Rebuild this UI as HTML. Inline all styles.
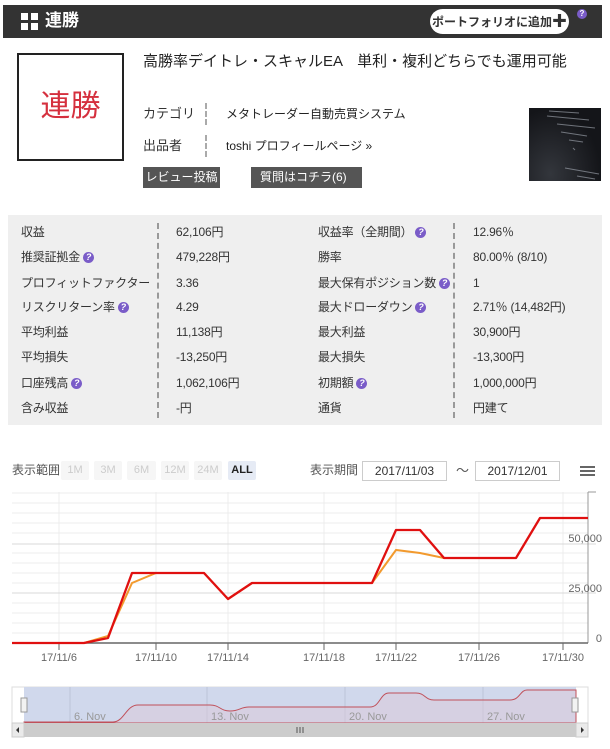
<!DOCTYPE html>
<html><head><meta charset="utf-8"><style>
*{margin:0;padding:0;box-sizing:border-box}
body{width:610px;height:749px;background:#fff;font-family:"Liberation Sans","Noto Sans CJK JP",sans-serif;color:#333;position:relative;overflow:hidden}
.a{position:absolute;white-space:nowrap}
.hdr{left:3px;top:5px;width:599px;height:33px;background:#333}
.q{display:inline-block;width:11px;height:11px;border-radius:50%;background:#7a5cc8;color:#fff;font-size:9px;line-height:11px;text-align:center;font-weight:bold;vertical-align:middle;margin-left:3px}
.tbl{left:8px;top:215px;width:594px;height:210px;background:#efefef}
.row{position:absolute;left:0;width:594px;height:25px;font-size:12px;line-height:25px;letter-spacing:-0.2px}
.row span{position:absolute}
.sep{position:absolute;top:4px;height:17px;border-left:2px dashed #999}
.btnr{position:absolute;top:461px;height:19px;font-size:11px;line-height:19px;text-align:center;color:#ccc;background:#f6f6f6;border-radius:2px}
.inp{position:absolute;top:461px;height:20px;border:1px solid #ccc;font-size:12px;line-height:18px;text-align:center;color:#333}
</style></head><body>
<div class="a hdr"></div>
<div class="a" style="left:21px;top:13px;width:7px;height:7px;background:#fff"></div>
<div class="a" style="left:31px;top:13px;width:7px;height:7px;background:#fff"></div>
<div class="a" style="left:21px;top:23px;width:7px;height:7px;background:#fff"></div>
<div class="a" style="left:31px;top:23px;width:7px;height:7px;background:#fff"></div>
<div class="a" style="left:45px;top:10px;color:#fff;font-size:17px;font-weight:bold;line-height:22px">連勝</div>
<div class="a" style="left:430px;top:9px;width:139px;height:25px;background:#fff;border-radius:13px;font-size:12px;font-weight:bold;line-height:25px;text-align:center;color:#333">ポートフォリオに追加<span style="font-size:15px">✚</span></div>
<div class="a" style="left:577px;top:9px;width:10px;height:10px;border-radius:50%;background:#7a5cc8;color:#fff;font-size:8px;line-height:10px;text-align:center;font-weight:bold">?</div>

<div class="a" style="left:17px;top:53px;width:107px;height:108px;border:2px solid #222;text-align:center;font-size:30px;line-height:104px;color:#d5303e;font-family:'Liberation Sans','Noto Sans CJK JP',sans-serif">連勝</div>
<div class="a" style="left:143px;top:52px;font-size:15px;line-height:20px;color:#222">高勝率デイトレ・スキャルEA　単利・複利どちらでも運用可能</div>
<div class="a" style="left:143px;top:104px;font-size:13px;line-height:20px">カテゴリ</div>
<div class="a" style="left:205px;top:103px;height:22px;border-left:2px dashed #aaa"></div>
<div class="a" style="left:226px;top:105px;font-size:12px;line-height:18px;color:#222">メタトレーダー自動売買システム</div>
<div class="a" style="left:143px;top:136px;font-size:13px;line-height:20px">出品者</div>
<div class="a" style="left:205px;top:135px;height:22px;border-left:2px dashed #aaa"></div>
<div class="a" style="left:226px;top:137px;font-size:12px;line-height:18px;color:#222">toshi プロフィールページ »</div>
<div class="a" style="left:143px;top:167px;width:77px;height:21px;background:#555;color:#fff;font-size:12px;line-height:21px;text-align:center">レビュー投稿</div>
<div class="a" style="left:251px;top:167px;width:111px;height:21px;background:#555;color:#fff;font-size:12px;line-height:21px;padding-left:9px">質問はコチラ(6)</div>
<div class="a" style="left:529px;top:108px;width:72px;height:73px;background:radial-gradient(ellipse at 30% 90%,#33363c,#141519 70%);overflow:hidden">
<svg width="72" height="73"><g stroke="#aab0ba" stroke-width="1" opacity=".6"><line x1="18" y1="8" x2="60" y2="12"/><line x1="28" y1="16" x2="66" y2="20"/><line x1="32" y1="24" x2="58" y2="28"/><line x1="40" y1="32" x2="54" y2="34"/><line x1="44" y1="40" x2="46" y2="42"/><line x1="36" y1="60" x2="70" y2="66"/><line x1="48" y1="68" x2="66" y2="71"/><line x1="20" y1="3" x2="50" y2="5"/></g></svg></div>

<div class="a tbl">
<div class="sep" style="left:149px;top:8px;height:195px"></div>
<div class="sep" style="left:445px;top:8px;height:195px"></div>
<div class="row" style="top:5px"><span style="left:13px">収益</span><span style="left:168px">62,106円</span><span style="left:310px">収益率（全期間）<i class="q">?</i></span><span style="left:465px">12.96％</span></div>
<div class="row" style="top:30px"><span style="left:13px">推奨証拠金<i class="q">?</i></span><span style="left:168px">479,228円</span><span style="left:310px">勝率</span><span style="left:465px">80.00％ (8/10)</span></div>
<div class="row" style="top:56px"><span style="left:13px">プロフィットファクター</span><span style="left:168px">3.36</span><span style="left:310px">最大保有ポジション数<i class="q">?</i></span><span style="left:465px">1</span></div>
<div class="row" style="top:80px"><span style="left:13px">リスクリターン率<i class="q">?</i></span><span style="left:168px">4.29</span><span style="left:310px">最大ドローダウン<i class="q">?</i></span><span style="left:465px">2.71％ (14,482円)</span></div>
<div class="row" style="top:105px"><span style="left:13px">平均利益</span><span style="left:168px">11,138円</span><span style="left:310px">最大利益</span><span style="left:465px">30,900円</span></div>
<div class="row" style="top:130px"><span style="left:13px">平均損失</span><span style="left:168px">-13,250円</span><span style="left:310px">最大損失</span><span style="left:465px">-13,300円</span></div>
<div class="row" style="top:156px"><span style="left:13px">口座残高<i class="q">?</i></span><span style="left:168px">1,062,106円</span><span style="left:310px">初期額<i class="q">?</i></span><span style="left:465px">1,000,000円</span></div>
<div class="row" style="top:181px"><span style="left:13px">含み収益</span><span style="left:168px">-円</span><span style="left:310px">通貨</span><span style="left:465px">円建て</span></div>
</div>

<div class="a" style="left:12px;top:462px;font-size:12px;line-height:17px;color:#555">表示範囲</div>
<div class="btnr" style="left:61px;width:28px">1M</div>
<div class="btnr" style="left:94px;width:28px">3M</div>
<div class="btnr" style="left:127px;width:29px">6M</div>
<div class="btnr" style="left:161px;width:28px">12M</div>
<div class="btnr" style="left:194px;width:28px">24M</div>
<div class="btnr" style="left:228px;width:28px;background:#e6ebf5;color:#222;font-weight:bold">ALL</div>
<div class="a" style="left:310px;top:462px;font-size:12px;line-height:17px;color:#555">表示期間</div>
<div class="inp" style="left:362px;width:85px">2017/11/03</div>
<div class="a" style="left:456px;top:462px;font-size:13px;line-height:17px;color:#555">～</div>
<div class="inp" style="left:475px;width:85px">2017/12/01</div>
<div class="a" style="left:580px;top:466px;width:15px;height:2px;background:#666;box-shadow:0 4px 0 #666,0 8px 0 #666"></div>

<svg class="a" style="left:0;top:485px" width="610" height="264" viewBox="0 485 610 264" font-family="Liberation Sans, sans-serif">
<g stroke="#ececec" stroke-width="1">
<line x1="12" y1="493" x2="588" y2="493"/><line x1="12" y1="503" x2="588" y2="503"/><line x1="12" y1="513" x2="588" y2="513"/><line x1="12" y1="523" x2="588" y2="523"/><line x1="12" y1="533" x2="588" y2="533"/><line x1="12" y1="553" x2="588" y2="553"/><line x1="12" y1="563" x2="588" y2="563"/><line x1="12" y1="573" x2="588" y2="573"/><line x1="12" y1="583" x2="588" y2="583"/><line x1="12" y1="603" x2="588" y2="603"/><line x1="12" y1="613" x2="588" y2="613"/><line x1="12" y1="623" x2="588" y2="623"/><line x1="12" y1="633" x2="588" y2="633"/>
<line x1="59" y1="492" x2="59" y2="643"/><line x1="156" y1="492" x2="156" y2="643"/><line x1="228" y1="492" x2="228" y2="643"/><line x1="324" y1="492" x2="324" y2="643"/><line x1="396" y1="492" x2="396" y2="643"/><line x1="479" y1="492" x2="479" y2="643"/><line x1="563" y1="492" x2="563" y2="643"/>
</g>
<g stroke="#d8d8d8"><line x1="12" y1="544" x2="596" y2="544"/><line x1="12" y1="593" x2="596" y2="593"/></g>
<line x1="588" y1="492" x2="588" y2="643" stroke="#999"/><line x1="588" y1="492" x2="596" y2="492" stroke="#999"/>
<line x1="12" y1="643" x2="588" y2="643" stroke="#666" stroke-width="1.5"/>
<g stroke="#666"><line x1="59" y1="643" x2="59" y2="650"/><line x1="156" y1="643" x2="156" y2="650"/><line x1="228" y1="643" x2="228" y2="650"/><line x1="324" y1="643" x2="324" y2="650"/><line x1="396" y1="643" x2="396" y2="650"/><line x1="479" y1="643" x2="479" y2="650"/><line x1="563" y1="643" x2="563" y2="650"/></g>
<g font-size="11" fill="#666" text-anchor="end"><text x="602" y="542">50,000</text><text x="602" y="592">25,000</text><text x="602" y="642">0</text></g>
<g font-size="11" fill="#666" text-anchor="middle"><text x="59" y="661">17/11/6</text><text x="156" y="661">17/11/10</text><text x="228" y="661">17/11/14</text><text x="324" y="661">17/11/18</text><text x="396" y="661">17/11/22</text><text x="479" y="661">17/11/26</text><text x="563" y="661">17/11/30</text></g>
<polyline fill="none" stroke="#f29a2e" stroke-width="2" points="84,643 108,636 132,583 156,573 204,573 228,599 252,583 372,583 396,550 420,553 444,558"/>
<polyline fill="none" stroke="#e01010" stroke-width="2.3" stroke-linejoin="round" points="12,643 84,643 108,638 132,573 204,573 228,599 252,583 372,583 396,530 420,530 444,558 516,558 540,518 588,518"/>
<rect x="12" y="687" width="576" height="36" fill="#fff" stroke="#ddd"/>
<rect x="24" y="687" width="552" height="36" fill="#d0d8ec"/>
<g stroke="#bcc4d8"><line x1="70" y1="687" x2="70" y2="723"/><line x1="207" y1="687" x2="207" y2="723"/><line x1="345" y1="687" x2="345" y2="723"/><line x1="483" y1="687" x2="483" y2="723"/></g>
<path d="M24,722 L113,722 C124,722 126,705 138,705 L210,705 C220,705 220,711 230,711 C240,711 240,707 249,707 L370,707 C380,707 380,693 389,693 L416,693 C425,693 425,700 434,700 L510,700 C520,700 520,690 527,690 L576,690 L576,723 L24,723 Z" fill="#dcc8d8" fill-opacity=".5" stroke="#c0505a" stroke-width="1"/>
<g font-size="11" fill="#999"><text x="74" y="720">6. Nov</text><text x="211" y="720">13. Nov</text><text x="349" y="720">20. Nov</text><text x="487" y="720">27. Nov</text></g>
<rect x="21" y="698" width="6" height="14" fill="#f2f2f2" stroke="#999"/>
<rect x="572" y="698" width="6" height="14" fill="#f2f2f2" stroke="#999"/>
<rect x="12" y="723" width="576" height="14" fill="#eee"/>
<rect x="24" y="723" width="552" height="14" fill="#cccccc"/>
<rect x="12" y="723" width="12" height="14" fill="#eaeaea" stroke="#ccc"/>
<rect x="576" y="723" width="12" height="14" fill="#eaeaea" stroke="#ccc"/>
<path d="M16,730 l3,-3 v6z M584,730 l-3,-3 v6z" fill="#333"/>
<g stroke="#555"><line x1="297" y1="727" x2="297" y2="733"/><line x1="300" y1="727" x2="300" y2="733"/><line x1="303" y1="727" x2="303" y2="733"/></g>
</svg>
</body></html>
